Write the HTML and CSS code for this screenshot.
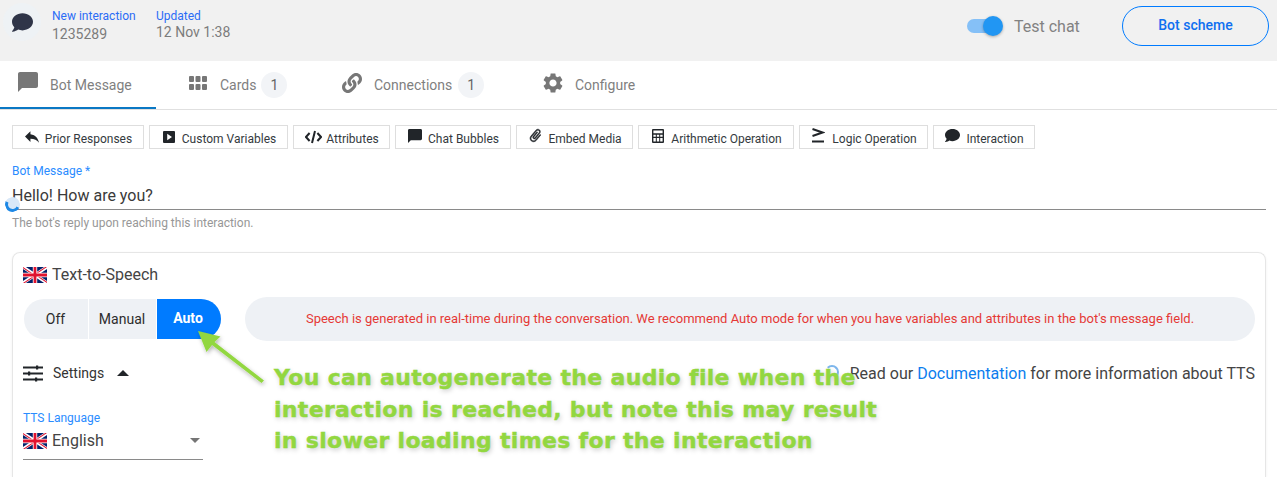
FILE: index.html
```html
<!DOCTYPE html>
<html lang="en">
<head>
<meta charset="utf-8">
<title>Bot Message</title>
<link rel="stylesheet" href="styles.css">
</head>
<body>
<svg class="defs" width="0" height="0" aria-hidden="true">
  <symbol id="uk" viewBox="0 0 60 40" preserveAspectRatio="none">
    <clipPath id="ukc"><path d="M30 20h30v20zM30 20v20H0zM30 20H0V0zM30 20V0h30z"/></clipPath>
    <rect width="60" height="40" fill="#012169"/>
    <path d="M0 0l60 40M60 0L0 40" stroke="#fff" stroke-width="8"/>
    <path d="M0 0l60 40M60 0L0 40" stroke="#E0122E" stroke-width="5" clip-path="url(#ukc)"/>
    <path d="M30 0v40M0 20h60" stroke="#fff" stroke-width="11"/>
    <path d="M30 0v40M0 20h60" stroke="#E0122E" stroke-width="7"/>
  </symbol>
  <symbol id="bubble" viewBox="0 0 512 512">
    <path d="M256 32C114.6 32 0 125.1 0 240c0 49.6 21.4 95 57 130.7C44.5 421.1 2.7 466 2.2 466.5c-2.2 2.3-2.8 5.7-1.5 8.7S4.8 480 8 480c66.3 0 116-31.8 140.6-51.4 32.7 12.3 69 19.4 107.4 19.4 141.4 0 256-93.1 256-208S397.4 32 256 32z"/>
  </symbol>
  <symbol id="chat" viewBox="2 2 20 20">
    <path d="M20 2H4c-1.1 0-2 .9-2 2v18l4-4h14c1.1 0 2-.9 2-2V4c0-1.1-.9-2-2-2z"/>
  </symbol>
</svg>

<header class="topbar">
  <div class="topbar-left">
    <span class="avatar"><svg class="avatar-icon"><use href="#bubble"/></svg></span>
    <div class="meta meta-id">
      <span class="meta-label">New interaction</span>
      <span class="meta-value">1235289</span>
    </div>
    <div class="meta meta-date">
      <span class="meta-label">Updated</span>
      <span class="meta-value">12 Nov 1:38</span>
    </div>
  </div>
  <div class="topbar-right">
    <span class="switch"><span class="switch-knob"></span></span>
    <span class="switch-label">Test chat</span>
    <button class="scheme-btn">Bot scheme</button>
  </div>
</header>

<nav class="tabs">
  <a class="tab tab-active">
    <svg class="tab-icon"><use href="#chat"/></svg>
    <span>Bot Message</span>
  </a>
  <a class="tab tab-cards">
    <svg class="tab-icon" viewBox="0 0 18 14"><path d="M0 1a1 1 0 0 1 1-1h3a1 1 0 0 1 1 1v4a1 1 0 0 1-1 1H1a1 1 0 0 1-1-1zM6.5 1a1 1 0 0 1 1-1h3a1 1 0 0 1 1 1v4a1 1 0 0 1-1 1h-3a1 1 0 0 1-1-1zM13 1a1 1 0 0 1 1-1h3a1 1 0 0 1 1 1v4a1 1 0 0 1-1 1h-3a1 1 0 0 1-1-1zM0 9a1 1 0 0 1 1-1h3a1 1 0 0 1 1 1v4a1 1 0 0 1-1 1H1a1 1 0 0 1-1-1zM6.5 9a1 1 0 0 1 1-1h3a1 1 0 0 1 1 1v4a1 1 0 0 1-1 1h-3a1 1 0 0 1-1-1zM13 9a1 1 0 0 1 1-1h3a1 1 0 0 1 1 1v4a1 1 0 0 1-1 1h-3a1 1 0 0 1-1-1z"/></svg>
    <span>Cards</span>
    <span class="badge">1</span>
  </a>
  <a class="tab tab-connections">
    <svg class="tab-icon" viewBox="0 0 512 512"><path d="M326.612 185.391c59.747 59.809 58.927 155.698.36 214.59-.11.12-.24.25-.36.37l-67.2 67.2c-59.27 59.27-155.699 59.262-214.96 0-59.27-59.26-59.27-155.7 0-214.96l37.106-37.106c9.84-9.84 26.786-3.3 27.294 10.606.648 17.722 3.826 35.527 9.69 52.721 1.986 5.822.567 12.262-3.783 16.612l-13.087 13.087c-28.026 28.026-28.905 73.66-1.155 101.96 28.024 28.579 74.086 28.749 102.325.51l67.2-67.19c28.191-28.191 28.073-73.757 0-101.83-3.701-3.694-7.429-6.564-10.341-8.569a16.037 16.037 0 0 1-6.947-12.606c-.396-10.567 3.348-21.456 11.698-29.806l21.054-21.055c5.521-5.521 14.182-6.199 20.584-1.731a152.482 152.482 0 0 1 20.522 17.197zM467.547 44.449c-59.261-59.262-155.69-59.27-214.96 0l-67.2 67.2c-.12.12-.25.25-.36.37-58.566 58.892-59.387 154.781.36 214.59a152.454 152.454 0 0 0 20.521 17.196c6.402 4.468 15.064 3.789 20.584-1.731l21.054-21.055c8.35-8.35 12.094-19.239 11.698-29.806a16.037 16.037 0 0 0-6.947-12.606c-2.912-2.005-6.64-4.875-10.341-8.569-28.073-28.073-28.191-73.639 0-101.83l67.2-67.19c28.239-28.239 74.3-28.069 102.325.51 27.75 28.3 26.872 73.934-1.155 101.96l-13.087 13.087c-4.35 4.35-5.769 10.79-3.783 16.612 5.864 17.194 9.042 34.999 9.69 52.721.509 13.906 17.454 20.446 27.294 10.606l37.106-37.106c59.271-59.259 59.271-155.699.001-214.959z"/></svg>
    <span>Connections</span>
    <span class="badge">1</span>
  </a>
  <a class="tab tab-config">
    <svg class="tab-icon" viewBox="2.4 2 19.2 20"><path d="M19.14 12.94c.04-.3.06-.61.06-.94 0-.32-.02-.64-.07-.94l2.03-1.58c.18-.14.23-.41.12-.61l-1.92-3.32c-.12-.22-.37-.29-.59-.22l-2.39.96c-.5-.38-1.03-.7-1.62-.94l-.36-2.54c-.04-.24-.24-.41-.48-.41h-3.84c-.24 0-.43.17-.47.41l-.36 2.54c-.59.24-1.13.57-1.62.94l-2.39-.96c-.22-.08-.47 0-.59.22L2.74 8.87c-.12.21-.08.47.12.61l2.03 1.58c-.05.3-.09.63-.09.94s.02.64.07.94l-2.03 1.58c-.18.14-.23.41-.12.61l1.92 3.32c.12.22.37.29.59.22l2.39-.96c.5.38 1.03.7 1.62.94l.36 2.54c.05.24.24.41.48.41h3.84c.24 0 .44-.17.47-.41l.36-2.54c.59-.24 1.13-.56 1.62-.94l2.39.96c.22.08.47 0 .59-.22l1.92-3.32c.12-.22.07-.47-.12-.61l-2.01-1.58zM12 15.6c-1.98 0-3.6-1.62-3.6-3.6s1.62-3.6 3.6-3.6 3.6 1.62 3.6 3.6-1.62 3.6-3.6 3.6z"/></svg>
    <span>Configure</span>
  </a>
</nav>

<main class="content">
  <div class="toolbar">
    <button class="tool tool-prior"><svg class="tool-icon" viewBox="3 5 18 15"><path d="M10 9V5l-7 7 7 7v-4.1c5 0 8.5 1.6 11 5.1-1-5-4-10-11-11z"/></svg>Prior Responses</button>
    <button class="tool tool-vars"><svg class="tool-icon" viewBox="0 0 12 12"><path fill-rule="evenodd" d="M1 0h10a1 1 0 0 1 1 1v10a1 1 0 0 1-1 1H1a1 1 0 0 1-1-1V1a1 1 0 0 1 1-1zm3.2 2.8v6.4L9 6z"/></svg>Custom Variables</button>
    <button class="tool tool-attr"><svg class="tool-icon tool-icon-wide" viewBox="0 0 17 14"><path d="M4.6 3 1 7l3.6 4M12.4 3 16 7l-3.6 4M10 1 7 13" fill="none" stroke="#212529" stroke-width="2"/></svg>Attributes</button>
    <button class="tool tool-chat"><svg class="tool-icon"><use href="#chat"/></svg>Chat Bubbles</button>
    <button class="tool tool-media"><svg class="tool-icon" viewBox="0 0 24 24"><g transform="rotate(40 12 12)"><path stroke="#212529" stroke-width=".9" d="M16.5 6v11.5c0 2.21-1.79 4-4 4s-4-1.79-4-4V5c0-1.38 1.12-2.5 2.5-2.5s2.5 1.12 2.5 2.5v10.5c0 .55-.45 1-1 1s-1-.45-1-1V6H10v9.5c0 1.38 1.12 2.5 2.5 2.5s2.5-1.12 2.5-2.5V5c0-2.21-1.79-4-4-4S7 2.79 7 5v12.5c0 3.04 2.46 5.5 5.5 5.5s5.5-2.46 5.5-5.5V6h-1.5z"/></g></svg>Embed Media</button>
    <button class="tool tool-math"><svg class="tool-icon" viewBox="0 0 12 14"><path fill-rule="evenodd" d="M1 0h10a1 1 0 0 1 1 1v12a1 1 0 0 1-1 1H1a1 1 0 0 1-1-1V1a1 1 0 0 1 1-1zm.4 1.500v2.800h9.200V1.500zm0 4.300v2h2.400v-2zm3.400 0v2h2.400v-2zm3.400 0v2h2.400v-2zM1.400 9v3.500h2.400V9zm3.400 0v3.500h2.400V9zm3.400 0v3.500h2.400V9z"/></svg>Arithmetic Operation</button>
    <button class="tool tool-logic"><svg class="tool-icon" viewBox="0 0 13 15"><path d="M1 1l10 3.500L1 8M0.500 13.500h12" fill="none" stroke="#212529" stroke-width="2"/></svg>Logic Operation</button>
    <button class="tool tool-inter"><svg class="tool-icon tool-icon-bubble"><use href="#bubble"/></svg>Interaction</button>
  </div>

  <div class="field">
    <label class="field-label">Bot Message *</label>
    <div class="field-input">Hello! How are you?<span class="spinner"></span></div>
    <p class="field-help">The bot's reply upon reaching this interaction.</p>
  </div>

  <section class="card">
    <h2 class="card-title"><svg class="flag"><use href="#uk"/></svg>Text-to-Speech</h2>
    <div class="mode-row">
      <div class="segments">
        <span class="segment seg-off">Off</span>
        <span class="segment seg-manual">Manual</span>
        <span class="segment seg-auto">Auto</span>
      </div>
      <p class="notice">Speech is generated in real-time during the conversation. We recommend Auto mode for when you have variables and attributes in the bot's message field.</p>
    </div>
    <div class="settings-row">
      <div class="settings-toggle">
        <svg class="sliders" viewBox="0 0 20 17"><path d="M0 2.500h20M0 8.500h20M0 14.500h20" stroke="#212529" stroke-width="2" fill="none"/><path d="M13 0.500h2.200v4H13zM5 6.500h2.200v4H5zM12 12.500h2.200v4H12z" fill="#212529"/></svg>
        <span>Settings</span>
        <span class="caret-up"></span>
      </div>
      <p class="doc-note"><span class="mini-spinner"></span>Read our <a class="doc-link">Documentation</a> for more information about TTS</p>
    </div>
    <div class="select-field">
      <label class="field-label">TTS Language</label>
      <div class="select">
        <svg class="flag"><use href="#uk"/></svg>
        <span>English</span>
        <span class="caret-down"></span>
      </div>
    </div>
  </section>
</main>

<svg class="arrow" viewBox="0 0 90 70" aria-hidden="true">
  <defs><filter id="soft" x="-20%" y="-20%" width="140%" height="140%"><feDropShadow dx="1" dy="2" stdDeviation="2" flood-color="#000" flood-opacity=".3"/></filter></defs>
  <path filter="url(#soft)" fill="#92d740" d="M3 3 25.500 8.500 19.500 14 69 52.500 66.500 55 17 17 11.500 24z"/>
</svg>
<p class="annotation">You can autogenerate the audio file when the<br>interaction is reached, but note this may result<br>in slower loading times for the interaction</p>
</body>
</html>
```
FILE: styles.css
```css
* { box-sizing: border-box; }
html, body { height: 477px; overflow: hidden; }
body { margin: 0; position: relative; background: #fff; font-family: Roboto, "Liberation Sans", sans-serif; color: #212529; }
.defs { position: absolute; }
p, h2 { margin: 0; }
button { font-family: inherit; background: none; cursor: pointer; }

.topbar { height: 61px; background: #f1f1f1; display: flex; justify-content: space-between; align-items: flex-start; }
.topbar-left { display: flex; padding-left: 3px; padding-top: 3px; }
.avatar { width: 38px; height: 38px; border-radius: 50%; background: #eef2f5; display: flex; align-items: center; justify-content: center; margin-right: 11px; }
.avatar-icon { width: 21px; height: 21px; fill: #2f3548; }
.meta { display: flex; flex-direction: column; }
.meta-id { width: 104px; padding-top: 6px; }
.meta-date { padding-top: 6px; }
.meta-label { font-size: 12px; line-height: 15px; color: #2b6cf6; }
.meta-value { font-size: 14px; line-height: 17px; color: #7c7c7c; }
.meta-id .meta-value { margin-top: 2px; }
.meta-date .meta-value { margin-top: 0; }
.topbar-right { display: flex; align-items: center; padding: 6px 8px 0 0; }
.switch { width: 33px; height: 14px; border-radius: 7px; background: #85c0f7; position: relative; margin-right: 14px; }
.switch-knob { position: absolute; left: 16px; top: -3px; width: 20px; height: 20px; border-radius: 50%; background: #2196f3; box-shadow: 0 1px 3px rgba(0,0,0,.3); }
.switch-label { font-size: 16px; color: #828282; width: 108px; }
.scheme-btn { width: 147px; height: 40px; border: 1px solid #007bff; border-radius: 20px; color: #0f6ff0; font-size: 14px; font-weight: 500; padding: 0 0 2px; }

.tabs { height: 49px; display: flex; border-bottom: 1px solid #e0e0e0; }
.tab { display: flex; align-items: center; font-size: 14px; color: #7f7f7f; height: 48px; }
.tab-icon { fill: #777; flex: none; }
.tab-active { width: 156px; padding: 2px 0 0 18px; border-bottom: 2px solid #0a78c4; }
.tab-active .tab-icon { width: 20px; height: 20px; margin: -6px 12px 0 0; }
.tab-cards { padding-left: 33px; width: 186px; }
.tab-cards .tab-icon { width: 18px; height: 14px; margin: -5px 13px 0 0; }
.tab-connections { width: 201px; }
.tab-connections .tab-icon { width: 20px; height: 20px; margin: -5px 12px 0 0; }
.tab-config .tab-icon { width: 20px; height: 20px; margin: -5px 12px 0 0; }
.badge { width: 26px; height: 26px; border-radius: 50%; background: #f2f4f7; display: flex; align-items: center; justify-content: center; margin-left: 5px; color: #666; }
.tab-connections .badge { margin-left: 6px; }

.content { padding: 15px 11px 0 12px; }
.toolbar { display: flex; gap: 5px; }
.tool { height: 24px; border: 1px solid #dedede; background: #fff; display: flex; align-items: center; justify-content: center; padding: 3px 0 0 1px; font-size: 12px; color: #343a40; white-space: nowrap; }
.tool-icon { width: 14px; height: 12px; fill: #212529; margin: -4px 6px 0 0; flex: none; }
.tool-icon-wide { width: 17px; height: 14px; margin-right: 4px; }
.tool-icon-bubble { width: 15px; height: 15px; margin: -6px 6px 0 0; }
.tool-prior { width: 132px; }
.tool-vars { width: 139px; }
.tool-attr { width: 97px; }
.tool-chat { width: 116px; }
.tool-chat .tool-icon { height: 14px; width: 14px; margin-top: -6px; }
.tool-media { width: 117px; }
.tool-media .tool-icon { height: 15px; width: 15px; margin: -6px 5px 0 0; }
.tool-math { width: 156px; }
.tool-math .tool-icon { height: 14px; margin-top: -6px; }
.tool-logic { width: 129px; }
.tool-logic .tool-icon { height: 15px; margin: -6px 7px 0 0; }
.tool-inter { width: 102px; }

.field { margin-top: 15px; }
.field-label { display: block; font-size: 12px; line-height: 14px; color: #2a8cff; }
.field-input { position: relative; margin-top: 1px; height: 31px; line-height: 34px; font-size: 16px; color: #3a3a3a; border-bottom: 1px solid #8a8a8a; }
.spinner { position: absolute; left: -7px; top: 18px; width: 15px; height: 15px; border-radius: 50%; background: #d9e8f8; border: 3px solid #d9e8f8; border-bottom-color: #1e88e5; border-left-color: #1e88e5; transform: rotate(-20deg); }
.field-help { margin-top: 6px; font-size: 12px; line-height: 14px; color: #979797; }

.card { margin-top: 22px; height: 225px; border: 1px solid #e6e6e6; border-bottom: 0; border-radius: 8px 8px 0 0; box-shadow: 0 1px 3px rgba(0,0,0,.06); padding: 12px 10px 0; }
.card-title { display: flex; align-items: center; font-size: 16px; line-height: 20px; font-weight: 400; color: #444; }
.flag { width: 24px; height: 16px; margin-right: 5px; flex: none; }
.mode-row { display: flex; align-items: center; margin-top: 12px; }
.segments { display: flex; width: 197px; height: 40px; margin-left: 1px; border-radius: 20px; overflow: hidden; background: #eef1f5; font-size: 14px; margin-right: 24px; flex: none; }
.segment { display: flex; align-items: center; justify-content: center; color: #2c2c2c; }
.seg-off { width: 65px; border-right: 1px solid #fff; padding-right: 1px; }
.seg-manual { width: 68px; border-right: 1px solid #fff; padding-right: 1px; }
.seg-auto { width: 64px; background: #007bff; color: #fff; font-weight: 700; padding: 0 2px 2px 0; }
.notice { flex: 1; height: 44px; line-height: 44px; border-radius: 22px; background: #eef1f5; color: #e53935; font-size: 13px; text-align: center; }
.settings-row { display: flex; justify-content: space-between; align-items: center; margin-top: 20px; height: 24px; }
.settings-toggle { display: flex; align-items: center; font-size: 14px; color: #333; }
.sliders { width: 20px; height: 17px; margin-right: 10px; }
.caret-up { margin-left: 13px; border: 6px solid transparent; border-top: 0; border-bottom: 6px solid #212529; }
.doc-note { font-size: 16px; color: #444; position: relative; }
.doc-link { color: #0b7dee; }
.mini-spinner { position: absolute; left: -25px; top: 1px; width: 14px; height: 14px; border-radius: 50%; border: 2px solid transparent; border-top-color: #7db6ec; border-right-color: #7db6ec; }
.select-field { margin-top: 26px; width: 180px; }
.select { display: flex; align-items: center; height: 34px; border-bottom: 1px solid #8a8a8a; font-size: 16px; color: #444; padding-bottom: 4px; margin-top: 1px; }
.caret-down { margin-left: auto; margin-right: 3px; border: 5.500px solid transparent; border-bottom: 0; border-top: 5.500px solid #757575; }

.arrow { position: absolute; left: 195px; top: 328px; width: 90px; height: 70px; }
.annotation { position: absolute; left: 274px; top: 362px; font-family: "DejaVu Sans", sans-serif; font-weight: 700; font-size: 22px; line-height: 31.500px; color: #92d740; letter-spacing: 0.320px; white-space: nowrap; -webkit-text-stroke: 0.400px #92d740; text-shadow: 1px 2px 5px rgba(0,0,0,.22); }
```
